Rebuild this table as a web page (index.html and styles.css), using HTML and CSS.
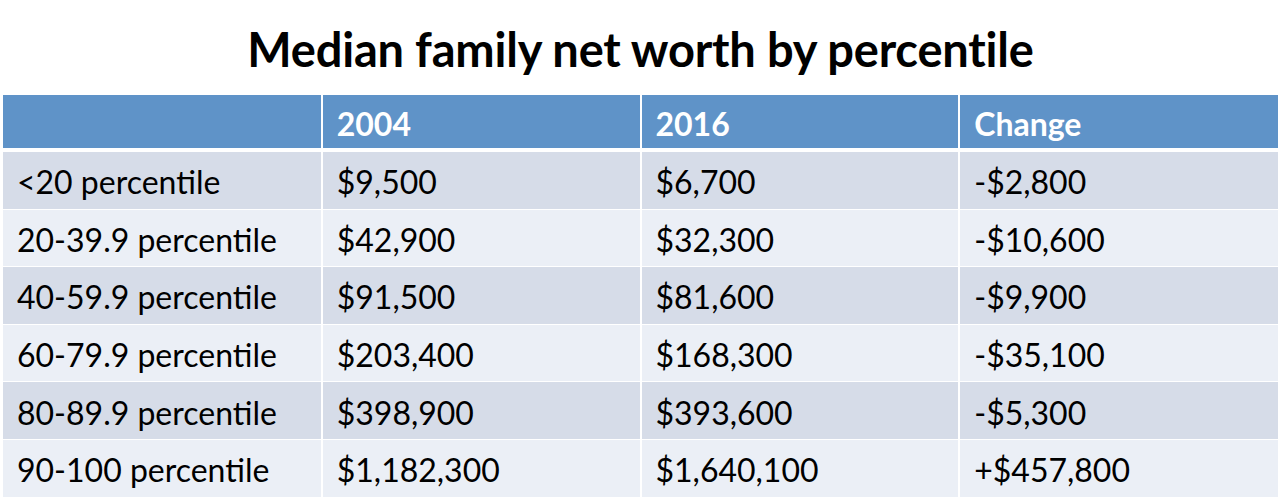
FILE: index.html
```html
<!DOCTYPE html>
<html lang="en">
<head>
<meta charset="utf-8">
<title>Median family net worth by percentile</title>
<link rel="stylesheet" href="styles.css">
</head>
<body>
<main class="slide">
  <h1 class="title">Median family net worth by percentile</h1>
  <table class="data">
    <thead>
      <tr><th></th><th>2004</th><th>2016</th><th>Change</th></tr>
    </thead>
    <tbody>
      <tr><td>&lt;20 percentile</td><td>$9,500</td><td>$6,700</td><td>-$2,800</td></tr>
      <tr><td>20-39.9 percentile</td><td>$42,900</td><td>$32,300</td><td>-$10,600</td></tr>
      <tr><td>40-59.9 percentile</td><td>$91,500</td><td>$81,600</td><td>-$9,900</td></tr>
      <tr><td>60-79.9 percentile</td><td>$203,400</td><td>$168,300</td><td>-$35,100</td></tr>
      <tr><td>80-89.9 percentile</td><td>$398,900</td><td>$393,600</td><td>-$5,300</td></tr>
      <tr><td>90-100 percentile</td><td>$1,182,300</td><td>$1,640,100</td><td>+$457,800</td></tr>
    </tbody>
  </table>
</main>
</body>
</html>
```

FILE: styles.css
```css
html, body {
  margin: 0;
  padding: 0;
  background: #ffffff;
  overflow: hidden;
}

.slide {
  width: 1280px;
  height: 497px;
  padding: 0 2px 0 3px;
  box-sizing: border-box;
  font-family: Lato, "Open Sans", sans-serif;
  color: #000000;
}

.title {
  margin: 0;
  height: 95px;
  box-sizing: border-box;
  padding-top: 20px;
  text-align: center;
  font-size: 47px;
  line-height: 58px;
  font-weight: 700;
  letter-spacing: -0.2px;
}

.data {
  width: 1275px;
  border-collapse: collapse;
  table-layout: fixed;
  font-size: 32px;
  line-height: 40px;
}

.data th,
.data td {
  text-align: left;
  padding: 0 0 0 14px;
  border-left: 2px solid #ffffff;
  border-right: 2px solid #ffffff;
}

.data th:first-child,
.data td:first-child {
  border-left: 0;
}

.data th:last-child,
.data td:last-child {
  border-right: 0;
}

.data thead th {
  height: 49px;
  background: #5f93c8;
  color: #ffffff;
  font-weight: 700;
  border-bottom: 4px solid #ffffff;
  padding-top: 4px;
}

.data tbody td {
  height: 52.6px;
  padding-top: 4px;
  border-bottom: 1px solid #ffffff;
}

.data tbody tr:nth-child(odd) td {
  background: #d6dce8;
}

.data tbody tr:nth-child(even) td {
  background: #ebeff6;
}
```
